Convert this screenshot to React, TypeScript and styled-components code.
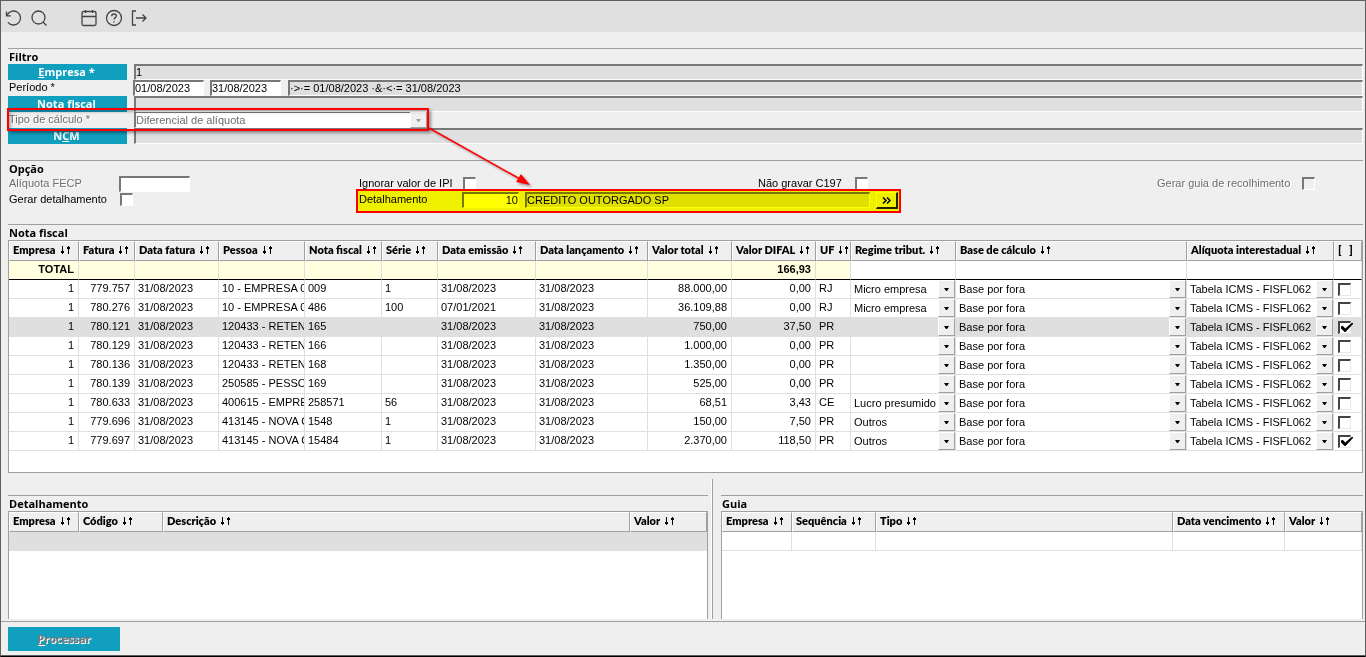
import React from "react";
import styled, { createGlobalStyle, css } from "styled-components";

const GlobalStyle = createGlobalStyle`
  * { box-sizing: border-box; }
  body { margin: 0; background: #efefef; }
  body, button, input, select { font: 11px/14px "Liberation Sans", Arial, sans-serif; color: #000; }
`;

const headingFont = css`
  font-family: "Open Sans", "Noto Sans", sans-serif;
  font-weight: 600;
`;

const compactHeadingFont = css`
  font-family: Lato, "Noto Sans", sans-serif;
  font-weight: 800;
`;

const sunken = css`
  border-style: solid;
  border-width: 2px 1px 1px 2px;
  border-color: #787878 #fff #fff #787878;
`;

const Page = styled.main`
  display: flex;
  flex-direction: column;
  min-height: 100vh;
  background: #efefef;
  border: 1px solid #5f5f5f;
  border-bottom-color: #000;
`;

const Toolbar = styled.header`
  display: flex;
  align-items: center;
  height: 31px;
  padding: 2px 3px 0;
  gap: 5px;
  background: #e0e0e0;
`;

const ToolGap = styled.span`
  width: 20px;
`;

const ToolButton = styled.button`
  display: flex;
  align-items: center;
  justify-content: center;
  width: 20px;
  height: 20px;
  padding: 0;
  border: 0;
  background: none;
`;

const Content = styled.div`
  display: flex;
  flex: 1;
  flex-direction: column;
  padding: 16px 2px 0 7px;
`;

const Section = styled.section`
  border-top: 1px solid #a0a0a0;
  padding-bottom: 16px;
`;

const Title = styled.h2`
  ${headingFont}
  font-weight: 700;
  height: 15px;
  margin: 0;
  padding: 0 1px;
  font-size: 11px;
  line-height: 16px;
`;

const FilterRow = styled.div`
  display: flex;
  height: 16px;
`;

const Label = styled.label<{ $muted?: boolean; $width: number }>`
  flex: none;
  width: ${(p) => p.$width}px;
  padding-left: 1px;
  line-height: 15px;
  white-space: nowrap;
  color: ${(p) => (p.$muted ? "#6d6d6d" : "#000")};
  text-shadow: ${(p) => (p.$muted ? "1px 1px #fff" : "none")};
`;

const LookupButton = styled.button`
  ${headingFont}
  font-weight: 700;
  flex: none;
  width: 119px;
  height: 16px;
  margin-right: 7px;
  padding: 0 2px 0 0;
  border: 0;
  background: #119fc0;
  color: #fff;
  font-size: 11px;
  line-height: 16px;
`;

const TextField = styled.input<{ $width?: number; $gray?: boolean; $gap?: number; $right?: boolean }>`
  ${sunken}
  flex: ${(p) => (p.$width ? "none" : "1")};
  width: ${(p) => (p.$width ? p.$width + "px" : "auto")};
  min-width: 0;
  height: 16px;
  margin-right: ${(p) => p.$gap || 0}px;
  padding: 0 0 2px;
  border-radius: 0;
  outline: 0;
  background: ${(p) => (p.$gray ? "#dfdfdf" : "#fff")};
  text-align: ${(p) => (p.$right ? "right" : "left")};
`;

const CalcRow = styled.div`
  position: relative;
  display: flex;
  width: 419px;
`;

const SelectBox = styled.span`
  position: relative;
  display: flex;
  flex: 1;
  min-width: 0;
`;

const FilterSelect = styled.select`
  ${sunken}
  border-top-width: 1px;
  flex: 1;
  height: 16px;
  padding: 0 0 1px;
  appearance: none;
  border-radius: 0;
  background: #fff;
  color: #6d6d6d;
  opacity: 1;
`;

const DropMark = styled.span<{ $muted?: boolean }>`
  position: absolute;
  top: 0;
  right: 0;
  display: flex;
  align-items: center;
  justify-content: center;
  width: 17px;
  height: 100%;
  border: 1px solid;
  border-color: #fff #a0a0a0 #a0a0a0 #fff;
  background: #efefef;
  color: ${(p) => (p.$muted ? "#a0a0a0" : "#000")};
  pointer-events: none;
`;

const OptionRow = styled.div<{ $columns: string }>`
  display: grid;
  grid-template-columns: ${(p) => p.$columns};
  height: 16px;
`;

const Option = styled.div`
  position: relative;
  display: flex;
  align-items: flex-start;
`;

const DetailOption = styled(Option)`
  padding-right: 3px;
`;

const Check = styled.input`
  ${sunken}
  position: relative;
  flex: none;
  width: 13px;
  height: 13px;
  margin: 1px 0 0 1px;
  appearance: none;
  background: ${(p) => (p.disabled ? "#efefef" : "#fff")};

  &:checked::before {
    content: "";
    position: absolute;
    left: 1px;
    top: 0;
    width: 12px;
    height: 9px;
    background: #000;
    clip-path: polygon(0 40%, 14% 30%, 35% 62%, 88% 0, 100% 0, 100% 10%, 38% 100%, 30% 100%, 0 60%);
  }
`;

const MoreButton = styled.button`
  display: flex;
  align-items: center;
  justify-content: center;
  width: 22px;
  height: 17px;
  padding: 0;
  border: solid;
  border-width: 1px 2px 2px 1px;
  border-color: #fff #222 #222 #fff;
  background: #efefef;
`;

const Callout = styled.span<{ $inset: string; $soft?: boolean }>`
  position: absolute;
  inset: ${(p) => p.$inset};
  border: 2px solid #f00;
  box-shadow: ${(p) => (p.$soft ? "2px 2px 3px #0006, inset 2px 2px 3px #0004" : "none")};
  pointer-events: none;
  z-index: 2;
`;

const Highlight = styled.span`
  position: absolute;
  inset: -2px 1px -3px -1px;
  background: #ff0;
  mix-blend-mode: multiply;
  pointer-events: none;
`;

const Pointer = styled.svg`
  position: absolute;
  left: 420px;
  top: 15px;
  overflow: visible;
  pointer-events: none;
  filter: drop-shadow(2px 2px 1px #0005);
  z-index: 3;
`;

const GridBox = styled.div<{ $tail?: boolean }>`
  flex: 1;
  border: 1px solid #a0a0a0;
  border-bottom-width: ${(p) => (p.$tail ? 1 : 0)}px;
  padding-bottom: ${(p) => (p.$tail ? 21 : 0)}px;
  background: #fff;
`;

const Table = styled.table`
  width: 100%;
  table-layout: fixed;
  border-collapse: separate;
  border-spacing: 0;
`;

const HeadCell = styled.th`
  height: 20px;
  padding: 0;
  border: 1px solid;
  border-color: #fff #a0a0a0 #a0a0a0 #fff;
  background: #efefef;
  text-align: left;
`;

const SortButton = styled.button`
  ${compactHeadingFont}
  display: flex;
  align-items: center;
  gap: 5px;
  width: 100%;
  height: 18px;
  padding: 0 0 2px 3px;
  border: 0;
  background: none;
  font-size: 11px;
  line-height: 16px;
  white-space: pre;
`;

const Row = styled.tr<{ $shade?: boolean }>`
  background: ${(p) => (p.$shade ? "#dfdfdf" : "#fff")};
`;

const Cell = styled.td<{ $right?: boolean; $form?: boolean }>`
  height: 19px;
  padding: ${(p) => (p.$form ? "0" : "0 4px 2px 3px")};
  border: solid #dfdfdf;
  border-width: 0 1px 1px 0;
  line-height: 14px;
  text-align: ${(p) => (p.$right ? "right" : "left")};
  white-space: nowrap;
  overflow: hidden;
`;

const TotalCell = styled(Cell)<{ $tint?: boolean }>`
  background: ${(p) => (p.$tint ? "#ffffdf" : "#fff")};
  border-bottom-color: #000;
  font-weight: 700;
`;

const CellSelect = styled.select`
  flex: 1;
  min-width: 0;
  height: 18px;
  padding: 0 0 1px 3px;
  appearance: none;
  border: 0;
  border-radius: 0;
  background: transparent;
`;

const CellCheck = styled(Check)`
  display: block;
  margin: 1px 0 0 4px;
  border-color: #444 #e8e8e8 #e8e8e8 #444;
`;

const Split = styled.div`
  display: flex;
  flex: 1;
  margin-top: -10px;
  padding-bottom: 2px;
`;

const Panel = styled.section<{ $grow: number }>`
  display: flex;
  flex: ${(p) => p.$grow} 1 0;
  flex-direction: column;
  margin-top: 16px;
  border-top: 1px solid #a0a0a0;
`;

const Splitter = styled.div`
  width: 2px;
  margin: 0 8px 0 3px;
  border-left: 1px solid #fff;
  border-right: 1px solid #a0a0a0;
`;

const Footer = styled.footer`
  height: 35px;
  padding: 5px 7px;
  border-top: 1px solid #a0a0a0;
  border-bottom: 1px solid #5f5f5f;
`;

const ProcessButton = styled.button`
  ${headingFont}
  font-weight: 700;
  width: 112px;
  height: 24px;
  padding: 0;
  border: 0;
  background: #119fc0;
  color: #787878;
  font-size: 11px;
  text-shadow: 1px 1px #fff;
`;

const Arrow = () => (
  <svg width="5" height="3" viewBox="0 0 5 3"><path d="M0 0h5L3 3H2z" fill="currentColor" /></svg>
);

const ArrowPair = styled.svg`
  flex: none;
`;

const SortIcon = () => (
  <ArrowPair width="9" height="8" viewBox="0 0 9 8" shapeRendering="crispEdges">
    <path d="M1 0h1v5h1v2h-1v1h-1v-1h-1v-2h1zM7 0h1v1h1v2h-1v5h-1v-5h-1v-2h1z" />
  </ArrowPair>
);

type Column = { name: string; width?: number; right?: boolean };

const HeaderRow = ({ columns }: { columns: Column[] }) => (
  <>
    <colgroup>
      {columns.map((c) => <col key={c.name} style={{ width: c.width }} />)}
    </colgroup>
    <thead>
      <tr>
        {columns.map((c) => (
          <HeadCell key={c.name}>
            <SortButton>{c.name}{c.name !== "[   ]" && <SortIcon />}</SortButton>
          </HeadCell>
        ))}
      </tr>
    </thead>
  </>
);

const invoiceColumns: Column[] = [
  { name: "Empresa", width: 70, right: true },
  { name: "Fatura", width: 56, right: true },
  { name: "Data fatura", width: 84 },
  { name: "Pessoa", width: 86 },
  { name: "Nota fiscal", width: 77 },
  { name: "Série", width: 56 },
  { name: "Data emissão", width: 98 },
  { name: "Data lançamento", width: 112 },
  { name: "Valor total", width: 84, right: true },
  { name: "Valor DIFAL", width: 84, right: true },
  { name: "UF", width: 35 },
  { name: "Regime tribut.", width: 105 },
  { name: "Base de cálculo" },
  { name: "Alíquota interestadual", width: 147 },
  { name: "[   ]", width: 28 },
];

const detailColumns: Column[] = [
  { name: "Empresa", width: 70 },
  { name: "Código", width: 84 },
  { name: "Descrição" },
  { name: "Valor", width: 77 },
];

const guideColumns: Column[] = [
  { name: "Empresa", width: 70 },
  { name: "Sequência", width: 84 },
  { name: "Tipo" },
  { name: "Data vencimento", width: 112 },
  { name: "Valor", width: 77 },
];

const D = "31/08/2023";
const invoices: string[][] = [
  ["1", "779.757", D, "10 - EMPRESA 03", "009", "1", D, D, "88.000,00", "0,00", "RJ", "Micro empresa"],
  ["1", "780.276", D, "10 - EMPRESA 03", "486", "100", "07/01/2021", D, "36.109,88", "0,00", "RJ", "Micro empresa"],
  ["1", "780.121", D, "120433 - RETENC", "165", "", D, D, "750,00", "37,50", "PR", ""],
  ["1", "780.129", D, "120433 - RETENC", "166", "", D, D, "1.000,00", "0,00", "PR", ""],
  ["1", "780.136", D, "120433 - RETENC", "168", "", D, D, "1.350,00", "0,00", "PR", ""],
  ["1", "780.139", D, "250585 - PESSOA", "169", "", D, D, "525,00", "0,00", "PR", ""],
  ["1", "780.633", D, "400615 - EMPRES", "258571", "56", D, D, "68,51", "3,43", "CE", "Lucro presumido"],
  ["1", "779.696", D, "413145 - NOVA C", "1548", "1", D, D, "150,00", "7,50", "PR", "Outros"],
  ["1", "779.697", D, "413145 - NOVA C", "15484", "1", D, D, "2.370,00", "118,50", "PR", "Outros"],
];
const selected = [2, 8];

const SelectCell = ({ label, value }: { label: string; value: string }) => (
  <Cell $form>
    <SelectBox>
      <CellSelect aria-label={label} defaultValue={value}><option>{value}</option></CellSelect>
      <DropMark><Arrow /></DropMark>
    </SelectBox>
  </Cell>
);

export default function App() {
  return (
    <>
      <GlobalStyle />
      <Page>
        <Toolbar>
          <ToolButton aria-label="Atualizar">
            <svg width="18" height="18" viewBox="0 0 18 18" fill="none" stroke="#444" strokeWidth="1.300">
              <path d="M1.500 2.500v4.300h4.300M2 6.500A7 7 0 1 1 3 13.300" />
            </svg>
          </ToolButton>
          <ToolButton aria-label="Pesquisar">
            <svg width="18" height="18" viewBox="0 0 18 18" fill="none" stroke="#444" strokeWidth="1.300">
              <circle cx="8.500" cy="8.500" r="6.500" /><path d="M13.200 13.200l3.300 3.300" />
            </svg>
          </ToolButton>
          <ToolGap />
          <ToolButton aria-label="Calendário">
            <svg width="18" height="18" viewBox="0 0 18 18" fill="none" stroke="#444" strokeWidth="1.300">
              <rect x="2" y="2.500" width="14" height="14" rx="1.500" /><path d="M2 7.500h14M5.500 1v3M12.500 1v3" />
            </svg>
          </ToolButton>
          <ToolButton aria-label="Ajuda">
            <svg width="18" height="18" viewBox="0 0 18 18" fill="none" stroke="#444" strokeWidth="1.300">
              <circle cx="9" cy="9" r="7.500" /><path d="M6.700 7.200c0-3 4.700-2.800 4.700-.2 0 1.700-2.400 1.600-2.400 3.500M9 12.200v1.300" />
            </svg>
          </ToolButton>
          <ToolButton aria-label="Sair">
            <svg width="18" height="18" viewBox="0 0 18 18" fill="none" stroke="#444" strokeWidth="1.300">
              <path d="M6 2H2.500v14H6M6 9h10M12.500 5.500L16 9l-3.500 3.500" />
            </svg>
          </ToolButton>
        </Toolbar>

        <Content>
          <Section>
            <Title>Filtro</Title>
            <FilterRow>
              <LookupButton><u>E</u>mpresa *</LookupButton>
              <TextField aria-label="Empresa" $gray readOnly defaultValue="1" />
            </FilterRow>
            <FilterRow>
              <Label htmlFor="start" $width={125}>Período *</Label>
              <TextField id="start" $width={71} $gap={6} defaultValue="01/08/2023" />
              <TextField aria-label="Fim do período" $width={71} $gap={7} defaultValue="31/08/2023" />
              <TextField aria-label="Intervalo" $gray readOnly defaultValue="·>·= 01/08/2023 ·&·<·= 31/08/2023" />
            </FilterRow>
            <FilterRow>
              <LookupButton>Nota fiscal</LookupButton>
              <TextField aria-label="Nota fiscal" $gray readOnly />
            </FilterRow>
            <FilterRow>
              <CalcRow>
                <Label htmlFor="calc" $muted $width={126}>Tipo de cálculo *</Label>
                <SelectBox>
                  <FilterSelect id="calc" disabled><option>Diferencial de alíquota</option></FilterSelect>
                  <DropMark $muted><Arrow /></DropMark>
                </SelectBox>
                <Callout $soft $inset="-4px -2px -3px -1px" />
                <Pointer width="104" height="60" viewBox="0 0 104 60">
                  <path d="M1 1L92 52" stroke="#f00" strokeWidth="1.500" />
                  <path d="M102 58L88 55L93 47z" fill="#f00" />
                </Pointer>
              </CalcRow>
            </FilterRow>
            <FilterRow>
              <LookupButton>N<u>C</u>M</LookupButton>
              <TextField aria-label="NCM" $gray readOnly />
            </FilterRow>
          </Section>

          <Section>
            <Title>Opção</Title>
            <OptionRow $columns="350px 399px 399px 1fr">
              <Option>
                <Label htmlFor="fecp" $muted $width={111}>Alíquota FECP</Label>
                <TextField id="fecp" $width={71} />
              </Option>
              <Option>
                <Label htmlFor="ipi" $width={104}>Ignorar valor de IPI</Label>
                <Check id="ipi" type="checkbox" />
              </Option>
              <Option>
                <Label htmlFor="c197" $width={97}>Não gravar C197</Label>
                <Check id="c197" type="checkbox" />
              </Option>
              <Option>
                <Label htmlFor="guia" $muted $width={145}>Gerar guia de recolhimento</Label>
                <Check id="guia" type="checkbox" disabled />
              </Option>
            </OptionRow>
            <OptionRow $columns="350px 543px">
              <Option>
                <Label htmlFor="gerar" $width={111}>Gerar detalhamento</Label>
                <Check id="gerar" type="checkbox" />
              </Option>
              <DetailOption>
                <Label htmlFor="det" $width={104}>Detalhamento</Label>
                <TextField id="det" $width={57} $gap={6} $right defaultValue="10" />
                <TextField aria-label="Descrição do detalhamento" $gray $gap={6} readOnly defaultValue="CREDITO OUTORGADO SP" />
                <MoreButton aria-label="Mais">
                  <svg width="9" height="7" viewBox="0 0 9 7" fill="none" stroke="#000" strokeWidth="1.500"><path d="M1 .500l3 3-3 3M5 .500l3 3-3 3" /></svg>
                </MoreButton>
                <Highlight />
                <Callout $inset="-3px 0 -4px -2px" />
              </DetailOption>
            </OptionRow>
          </Section>

          <Section>
            <Title>Nota fiscal</Title>
            <GridBox $tail>
              <Table>
                <HeaderRow columns={invoiceColumns} />
                <tbody>
                  <tr>
                    {invoiceColumns.map((c, i) => (
                      <TotalCell key={c.name} $right={c.right} $tint={i < 11}>
                        {i === 0 ? "TOTAL" : i === 9 ? "166,93" : ""}
                      </TotalCell>
                    ))}
                  </tr>
                  {invoices.map((row, r) => (
                    <Row key={r} $shade={r === 2}>
                      {row.slice(0, 11).map((value, i) => (
                        <Cell key={i} $right={invoiceColumns[i].right}>{value}</Cell>
                      ))}
                      <SelectCell label="Regime tributário" value={row[11]} />
                      <SelectCell label="Base de cálculo" value="Base por fora" />
                      <SelectCell label="Alíquota interestadual" value="Tabela ICMS - FISFL062" />
                      <Cell $form>
                        <CellCheck type="checkbox" aria-label="Selecionar" defaultChecked={selected.includes(r)} />
                      </Cell>
                    </Row>
                  ))}
                </tbody>
              </Table>
            </GridBox>
          </Section>

          <Split>
            <Panel $grow={700}>
              <Title>Detalhamento</Title>
              <GridBox>
                <Table>
                  <HeaderRow columns={detailColumns} />
                  <tbody>
                    <Row $shade>{detailColumns.map((c) => <Cell key={c.name} />)}</Row>
                  </tbody>
                </Table>
              </GridBox>
            </Panel>
            <Splitter />
            <Panel $grow={642}>
              <Title>Guia</Title>
              <GridBox>
                <Table>
                  <HeaderRow columns={guideColumns} />
                  <tbody>
                    <Row>{guideColumns.map((c) => <Cell key={c.name} />)}</Row>
                  </tbody>
                </Table>
              </GridBox>
            </Panel>
          </Split>
        </Content>

        <Footer>
          <ProcessButton disabled><u>P</u>rocessar</ProcessButton>
        </Footer>
      </Page>
    </>
  );
}
